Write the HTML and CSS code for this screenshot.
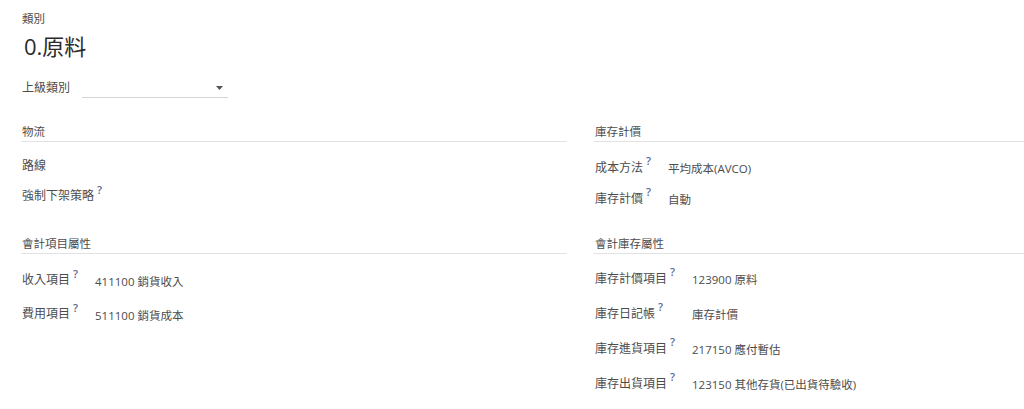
FILE: index.html
```html
<!DOCTYPE html>
<html lang="zh-Hant">
<head>
<meta charset="utf-8">
<title>類別</title>
<link rel="stylesheet" href="styles.css">
</head>
<body>
<div class="sheet">
  <div class="title-label">類別</div>
  <h1 class="title">0.原料</h1>
  <div class="parent-row">
    <span class="label">上級類別</span>
    <div class="select">
      <svg class="caret" width="7" height="4" viewBox="0 0 7 4"><path d="M0 0H7L3.5 4Z" fill="#555"/></svg>
    </div>
  </div>
  <div class="columns">
    <div class="col">
      <div class="group">
        <div class="group-title">物流</div>
        <div class="grid rows-30">
          <div class="label">路線</div><div class="value"></div>
          <div class="label">強制下架策略<sup>?</sup></div><div class="value"></div>
        </div>
      </div>
      <div class="group">
        <div class="group-title">會計項目屬性</div>
        <div class="grid rows-34">
          <div class="label">收入項目<sup>?</sup></div><div class="value">411100 銷貨收入</div>
          <div class="label">費用項目<sup>?</sup></div><div class="value">511100 銷貨成本</div>
        </div>
      </div>
    </div>
    <div class="col">
      <div class="group">
        <div class="group-title">庫存計價</div>
        <div class="grid rows-31">
          <div class="label">成本方法<sup>?</sup></div><div class="value">平均成本(AVCO)</div>
          <div class="label">庫存計價<sup>?</sup></div><div class="value">自動</div>
        </div>
      </div>
      <div class="group">
        <div class="group-title">會計庫存屬性</div>
        <div class="grid rows-35">
          <div class="label">庫存計價項目<sup>?</sup></div><div class="value">123900 原料</div>
          <div class="label">庫存日記帳<sup>?</sup></div><div class="value">庫存計價</div>
          <div class="label">庫存進貨項目<sup>?</sup></div><div class="value">217150 應付暫估</div>
          <div class="label">庫存出貨項目<sup>?</sup></div><div class="value">123150 其他存貨(已出貨待驗收)</div>
        </div>
      </div>
    </div>
  </div>
</div>
</body>
</html>
```

FILE: styles.css
```css
html, body {
  margin: 0;
  padding: 0;
  background: #ffffff;
  overflow: hidden;
}
body {
  font-family: "Open Sans", "Noto Sans CJK TC", sans-serif;
  color: #4c4c4c;
  font-size: 12px;
}
.sheet {
  padding: 11px 0 0 22px;
}
.title-label {
  font-size: 11.5px;
  line-height: 16px;
  color: #4c4c4c;
}
.title {
  margin: 5px 0 0 2px;
  font-size: 22px;
  line-height: 28px;
  font-weight: 400;
  color: #2b2b2b;
}
.parent-row {
  display: flex;
  align-items: flex-end;
  margin-top: 17px;
  height: 21px;
}
.parent-row .label {
  width: 60px;
  line-height: 20px;
  align-self: center;
}
.select {
  width: 146px;
  height: 20px;
  border-bottom: 1px solid #d6d6d6;
  display: flex;
  justify-content: flex-end;
  align-items: center;
}
.caret {
  margin: 1px 5px 0 0;
}
.columns {
  display: grid;
  grid-template-columns: 545px 430px;
  column-gap: 28px;
  margin-top: 25px;
}
.col {
  display: flex;
  flex-direction: column;
  gap: 25px;
}
.col + .col .group + .group {
  margin-top: -3px;
}
.group-title {
  font-size: 11.5px;
  line-height: 16px;
  color: #4c4c4c;
  border-bottom: 1px solid #e2e2e2;
  padding: 1px 0 1px 1px;
  margin-left: -1px;
}
.grid {
  display: grid;
  grid-template-columns: max-content 1fr;
  column-gap: 17px;
  margin-top: 8px;
}
.rows-30 { grid-auto-rows: 30px; }
.rows-31 { grid-auto-rows: 31px; margin-top: 9px; }
.rows-34 { grid-auto-rows: 34px; }
.rows-35 { grid-auto-rows: 35px; margin-top: 6px; }
.label {
  display: flex;
  align-items: center;
  white-space: nowrap;
  color: #4c4c4c;
}
.value {
  display: flex;
  align-items: center;
  padding-top: 3px;
  font-size: 11.5px;
  color: #4c4c4c;
  white-space: nowrap;
}
sup {
  font-size: 11px;
  font-weight: 600;
  color: #5a6a90;
  margin-left: 3px;
  line-height: 1;
  position: relative;
  top: -6px;
}
```
